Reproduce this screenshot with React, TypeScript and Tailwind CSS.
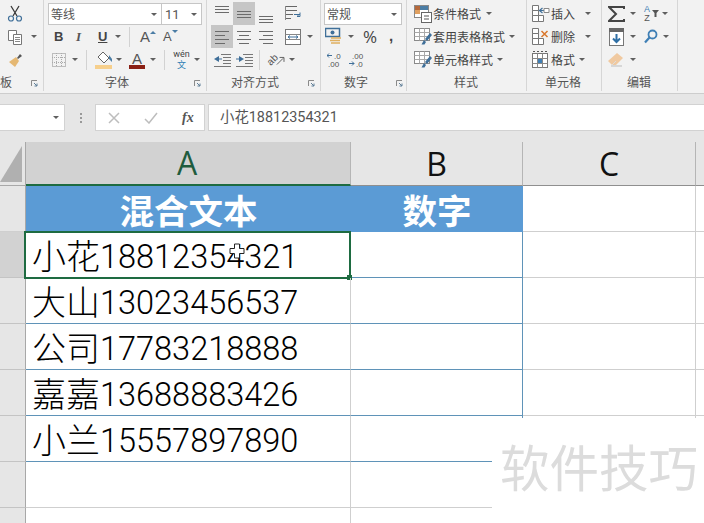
import React from "react";

const Caret = ({ className = "" }: { className?: string }) => (
  <svg width="6" height="3" viewBox="0 0 6 3" className={"shrink-0 " + className}><path d="M0 0h6L3 3z" fill="#5f5f5f" /></svg>
);

const Launcher = ({ className = "" }: { className?: string }) => (
  <svg width="7" height="7" viewBox="0 0 7 7" className={"shrink-0 " + className}>
    <path d="M0.5 6V0.5H6" fill="none" stroke="#8a8a8a" />
    <path d="M3 3l3 3M6 3.5V6H3.5" fill="none" stroke="#5f7f98" />
  </svg>
);

const VSep = ({ className = "" }: { className?: string }) => <div className={"w-px h-[20px] bg-[#d2d2d2] shrink-0 " + className} />;

const Lines = ({ kind }: { kind: "left" | "center" | "right" | "top" | "middle" | "bottom" }) => {
  const f: Record<string, [number, number, number][]> = {
    left: [[1, 15, 6], [1, 11, 10], [1, 15, 14], [1, 11, 18]],
    center: [[1, 15, 6], [3, 13, 10], [1, 15, 14], [3, 13, 18]],
    right: [[1, 15, 6], [5, 15, 10], [1, 15, 14], [5, 15, 18]],
    top: [[1, 15, 4], [1, 15, 7], [1, 15, 10]],
    middle: [[1, 15, 9], [1, 15, 12], [1, 15, 15]],
    bottom: [[1, 15, 14], [1, 15, 17], [1, 15, 20]],
  };
  return (
    <svg width="16" height="23" viewBox="0 0 16 23">
      {f[kind].map(([a, b, y]) => (<path key={y} d={`M${a} ${y + 0.5}H${b}`} stroke="#6b6b6b" />))}
    </svg>
  );
};

const Cell = ({ active, kind }: { active?: boolean; kind: "left" | "center" | "right" | "top" | "middle" | "bottom" }) => (
  <div className={"w-[22px] h-[23px] flex items-center justify-center shrink-0 " + (active ? "bg-[#c6c6c6]" : "")}><Lines kind={kind} /></div>
);

const TableIcon = ({ brush }: { brush?: boolean }) => (
  <svg width="18" height="18" viewBox="0 0 18 18" className="shrink-0">
    <rect x="0.5" y="0.5" width="15" height="12" fill="#fff" stroke="#8a8a8a" />
    <path d="M0.5 4.5h15M0.5 8.5h15M5.5 0.5v12M10.5 0.5v12" stroke="#a9a9a9" />
    {brush && <path d="M16 5l-5 6 2 2 5-6zM10 12l2 2-1.500 2.500H7.500z" fill="#3f6f99" />}
  </svg>
);

const GridIcon = ({ kind }: { kind: "insert" | "delete" | "format" }) => (
  <svg width="18" height="20" viewBox="0 0 18 20" className="shrink-0">
    {kind === "format" ? (
      <>
        <rect x="0.5" y="3.500" width="15" height="14" fill="#fff" stroke="#777" />
        <path d="M0.500 8.500h15M0.500 13.500h15M5.500 3.500v14M10.500 3.500v14" stroke="#888" />
        <rect x="6" y="9" width="4" height="4" fill="#3f7fb5" />
        <path d="M1 1.500h2M5 1.500h2M9 1.500h2M13 1.500h2" stroke="#555" />
      </>
    ) : (
      <>
        <path d="M0.500 1.500h6v5h-6zM0.500 6.500h6v5h-6zM0.500 11.500h6v6h-6zM6.500 11.500h5v6h-5z" fill="#fff" stroke="#777" />
        {kind === "insert" ? (
          <>
            <path d="M17 6.500H8M10.500 4l-3 2.500 3 2.500" fill="none" stroke="#3f6f99" strokeWidth="1.200" />
            <path d="M12 4.500h5v4h-5z" fill="#fff" stroke="#888" />
          </>
        ) : (
          <path d="M9.500 4l6 6M15.500 4l-6 6" stroke="#d9772c" strokeWidth="1.500" />
        )}
      </>
    )}
  </svg>
);

const Group = ({ w, children, label, labelCls, launcher }: { w: string; children: React.ReactNode; label: string; labelCls: string; launcher?: string }) => (
  <div className={"flex flex-col h-[91px] pt-[2px] border-r border-[#d6d6d6] shrink-0 overflow-hidden " + w}>
    <div className="h-[71px] flex flex-col">{children}</div>
    <div className="h-[18px] flex items-center text-[12px] text-[#555] leading-none">
      <span className={labelCls}>{label}</span>
      {launcher && <Launcher className={"ml-auto mt-[3px] " + launcher} />}
    </div>
  </div>
);

const Row = ({ children, className = "" }: { children: React.ReactNode; className?: string }) => (
  <div className={"h-[23px] flex items-center shrink-0 " + className}>{children}</div>
);

const Ribbon = () => (
  <div className="h-[94px] bg-[#f2f2f2] border-b border-[#cdcdcd] flex text-[#444] text-[12px] leading-none">
    <Group w="w-[44px]" label="板" labelCls="ml-0" launcher="mr-[5px]">
      <Row>
        <svg width="16" height="17" viewBox="0 0 16 17" className="ml-[7px]"><path d="M4 1l6 10M12 1L6 11" stroke="#3a3a3a" strokeWidth="1.300" /><circle cx="4" cy="13.500" r="2.500" fill="none" stroke="#3f6f99" strokeWidth="1.200" /><circle cx="12" cy="13.500" r="2.500" fill="none" stroke="#3f6f99" strokeWidth="1.200" /></svg>
      </Row>
      <Row>
        <svg width="16" height="16" viewBox="0 0 16 16" className="ml-[7px]"><path d="M1.500 1.500h8v10h-8z" fill="#fff" stroke="#777" /><path d="M6.500 5.500h8v10h-8z" fill="#fff" stroke="#777" /><path d="M8 8.500h5M8 10.500h5M8 12.500h5" stroke="#888" /></svg>
        <Caret className="ml-[8px]" />
      </Row>
      <Row>
        <svg width="16" height="16" viewBox="0 0 16 16" className="ml-[8px]"><path d="M9 6l3-4 2 2-4 3z" fill="#555" /><path d="M8 5l3 4-4 6-6-5z" fill="#e5b873" /></svg>
      </Row>
    </Group>

    <Group w="w-[163px]" label="字体" labelCls="ml-[61px]" launcher="mr-[5px]">
      <Row className="items-start">
        <div className="ml-[4px] mt-[1px] w-[114px] h-[22px] bg-white border border-[#c6c6c6] flex items-center pl-[2px] text-[#555]">等线<Caret className="ml-auto mr-[4px]" /></div>
        <div className="ml-[-1px] mt-[1px] w-[41px] h-[22px] bg-white border border-[#c6c6c6] flex items-center pl-[3px] text-[13px] text-[#555] font-['Roboto']">11<Caret className="ml-auto mr-[4px]" /></div>
      </Row>
      <Row>
        <span className="ml-[10px] w-[10px] font-bold font-['Liberation_Sans'] text-[13px] text-[#444]">B</span>
        <span className="ml-[12px] w-[10px] italic font-bold font-['Liberation_Serif'] text-[13px] text-[#555]">I</span>
        <span className="ml-[12px] w-[10px] font-bold font-['Liberation_Sans'] text-[13px] text-[#444] underline">U</span>
        <Caret className="ml-[7px]" />
        <VSep className="ml-[8px]" />
        <span className="ml-[10px] w-[10px] font-['Liberation_Sans'] text-[15px] text-[#555]">A</span>
        <svg width="6" height="4" viewBox="0 0 6 4" className="mb-[10px]"><path d="M0 4l3-3 3 3z" fill="#4b7da5" /></svg>
        <span className="ml-[7px] w-[9px] font-['Liberation_Sans'] text-[13px] text-[#555]">A</span>
        <svg width="6" height="4" viewBox="0 0 6 4" className="mb-[10px]"><path d="M0 0l3 3 3-3z" fill="#4b7da5" /></svg>
      </Row>
      <Row>
        <svg width="14" height="14" viewBox="0 0 14 14" className="ml-[8px]"><rect x="0.500" y="0.500" width="13" height="13" fill="none" stroke="#888" strokeDasharray="1 1" /><path d="M0 4.500h14M0 9.500h14M4.500 0v14M9.500 0v14" stroke="#aaa" strokeDasharray="1 1" /></svg>
        <Caret className="ml-[6px]" />
        <VSep className="ml-[8px]" />
        <svg width="18" height="18" viewBox="0 0 18 18" className="ml-[8px]"><path d="M8 1l6 6-5 5-6-6z" fill="#fff" stroke="#666" /><path d="M14 4l3 4v3l-3-3z" fill="#4b7da5" /><rect x="0" y="14" width="17" height="4" fill="#f6cf8c" /></svg>
        <Caret className="ml-[3px]" />
        <div className="ml-[7px] w-[16px] h-[18px] flex flex-col items-center shrink-0"><span className="block font-['Liberation_Sans'] text-[15px] h-[14px] text-[#555] leading-none">A</span><div className="w-[16px] h-[4px] bg-[#8a2015]" /></div>
        <Caret className="ml-[5px]" />
        <VSep className="ml-[8px]" />
        <div className="ml-[8px] w-[17px] flex flex-col items-center gap-[1px] shrink-0"><span className="block text-[9px] leading-[9px] text-[#444] font-['Roboto']">wén</span><span className="block text-[9px] leading-[9px] text-[#2f7fb5]">文</span></div>
        <Caret className="ml-[4px]" />
      </Row>
    </Group>

    <Group w="w-[114px]" label="对齐方式" labelCls="ml-[24px]" launcher="mr-[5px]">
      <Row>
        <div className="ml-[4px]" />
        <Cell kind="top" /><Cell active kind="middle" /><Cell kind="bottom" />
        <svg width="17" height="17" viewBox="0 0 17 17" className="ml-[8px]"><path d="M1 1.500h11M1 5.500h11M1 9.500h7M1 13.500h5" stroke="#666" /><path d="M0.500 1v14" stroke="#888" /><path d="M9 9.500h6v-2M15 9.500v2h-3M12 9.500l2 2" fill="none" stroke="#3f6f99" /></svg>
      </Row>
      <Row>
        <div className="ml-[4px]" />
        <Cell active kind="left" /><Cell kind="center" /><Cell kind="right" />
        <svg width="16" height="16" viewBox="0 0 16 16" className="ml-[8px]"><rect x="0.500" y="0.500" width="15" height="15" fill="#fff" stroke="#777" /><path d="M0.500 5.500h15M0.500 10.500h15" stroke="#888" /><path d="M3 8h10M3 8l2-1.500M3 8l2 1.500M13 8l-2-1.500M13 8l-2 1.500" stroke="#3f6f99" /></svg>
        <Caret className="ml-[6px]" />
      </Row>
      <Row>
        <svg width="17" height="14" viewBox="0 0 17 14" className="ml-[7px]"><path d="M7 1.500h10M9 4.500h8M9 7.500h8M9 10.500h8M0 13.500h17" stroke="#777" /><path d="M0 6l5-3v6z" fill="#3f6f99" /><path d="M4 6h4" stroke="#3f6f99" /></svg>
        <svg width="17" height="14" viewBox="0 0 17 14" className="ml-[5px]"><path d="M7 1.500h10M9 4.500h8M9 7.500h8M9 10.500h8M0 13.500h17" stroke="#777" /><path d="M8 6L3 3v6z" fill="#3f6f99" /><path d="M0 6h4" stroke="#3f6f99" /></svg>
        <VSep className="ml-[6px]" />
        <div className="ml-[7px] w-[18px] h-[18px] flex items-center shrink-0">
          <span className="block rotate-[-45deg] text-[10px] leading-[10px] text-[#555] font-['Liberation_Sans']">ab</span>
          <svg width="10" height="10" viewBox="0 0 10 10" className="ml-[-2px] mt-[2px]"><path d="M1 9l7-7M4 1h5v5" fill="none" stroke="#555" /></svg>
        </div>
        <Caret className="ml-[4px]" />
      </Row>
    </Group>

    <Group w="w-[86px]" label="数字" labelCls="ml-[23px]" launcher="mr-[3px]">
      <Row className="items-start">
        <div className="ml-[3px] mt-[1px] w-[78px] h-[22px] bg-white border border-[#c6c6c6] flex items-center pl-[2px] text-[#555]">常规<Caret className="ml-auto mr-[4px]" /></div>
      </Row>
      <Row>
        <svg width="18" height="19" viewBox="0 0 18 19" className="ml-[4px]"><rect x="0.500" y="1.500" width="14" height="8" fill="none" stroke="#3f6f99" strokeWidth="1.500" /><circle cx="7.500" cy="5.500" r="2" fill="#3f6f99" /><path d="M6 11h10M5 13.500h10M6 16h9" stroke="#e0b060" strokeWidth="1.500" /></svg>
        <Caret className="ml-[5px]" />
        <span className="ml-[9px] text-[17px] text-[#444] font-['Open_Sans']">%</span>
        <span className="ml-[12px] text-[15px] font-bold text-[#444] font-['Liberation_Sans'] mt-[-3px]">,</span>
      </Row>
      <Row>
        <svg width="16" height="17" viewBox="0 0 16 17" className="ml-[6px]"><path d="M0 4.500h5M0 4.500l2-2M0 4.500l2 2" fill="none" stroke="#3f6f99" /><text x="7" y="8" fontSize="8" fill="#555" fontFamily="Liberation Sans">.0</text><text x="1" y="16" fontSize="8" fill="#555" fontFamily="Liberation Sans">.00</text></svg>
        <svg width="16" height="17" viewBox="0 0 16 17" className="ml-[6px]"><text x="3" y="8" fontSize="8" fill="#555" fontFamily="Liberation Sans">.00</text><path d="M0 12.500h5M5 12.500l-2-2M5 12.500l-2 2" fill="none" stroke="#3f6f99" /><text x="7" y="16" fontSize="8" fill="#555" fontFamily="Liberation Sans">.0</text></svg>
      </Row>
    </Group>

    <Group w="w-[120px]" label="样式" labelCls="ml-[47px]">
      <Row>
        <svg width="18" height="18" viewBox="0 0 18 18" className="ml-[7px] shrink-0"><rect x="0.500" y="0.500" width="14" height="12" fill="#fff" stroke="#888" /><rect x="1" y="1" width="5" height="4" fill="#b5683a" /><rect x="1" y="5" width="5" height="4" fill="#e0a060" /><rect x="6" y="1" width="8" height="4" fill="#4b7da5" /><rect x="7.500" y="7.500" width="10" height="10" fill="#fff" stroke="#666" /><path d="M10 11h5M10 14h5" stroke="#555" /></svg>
        <span className="ml-[1px]">条件格式</span><Caret className="ml-[5px]" />
      </Row>
      <Row>
        <div className="ml-[7px]"><TableIcon brush /></div>
        <span className="ml-[1px]">套用表格格式</span><Caret className="ml-[4px]" />
      </Row>
      <Row>
        <div className="ml-[7px]"><TableIcon brush /></div>
        <span className="ml-[1px]">单元格样式</span><Caret className="ml-[4px]" />
      </Row>
    </Group>

    <Group w="w-[75px]" label="单元格" labelCls="ml-[18px]">
      <Row><div className="ml-[5px]"><GridIcon kind="insert" /></div><span className="ml-[1px]">插入</span><Caret className="ml-[10px]" /></Row>
      <Row><div className="ml-[5px]"><GridIcon kind="delete" /></div><span className="ml-[1px]">删除</span><Caret className="ml-[10px]" /></Row>
      <Row><div className="ml-[5px]"><GridIcon kind="format" /></div><span className="ml-[1px]">格式</span><Caret className="ml-[4px]" /></Row>
    </Group>

    <Group w="w-[76px]" label="编辑" labelCls="ml-[25px]">
      <Row>
        <svg width="17" height="16" viewBox="0 0 17 16" className="ml-[6px]"><path d="M16 3V1H1l7 7-7 7h15v-2" fill="none" stroke="#444" strokeWidth="2" /></svg>
        <Caret className="ml-[5px]" />
        <div className="ml-[6px] w-[10px] flex flex-col items-center shrink-0 font-['Liberation_Sans'] text-[9px]">
          <span className="block leading-[9px] text-[#3f7fb5]">A</span>
          <span className="block leading-[9px] text-[#555]">Z</span>
        </div>
        <svg width="8" height="9" viewBox="0 0 8 9" className="shrink-0"><path d="M0 1h7L4.500 4v4h-2V4z" fill="#555" /></svg>
        <Caret className="ml-[2px]" />
      </Row>
      <Row>
        <svg width="15" height="18" viewBox="0 0 15 18" className="ml-[7px]"><rect x="0.500" y="0.500" width="14" height="17" fill="#fff" stroke="#777" /><rect x="0" y="0" width="15" height="4" fill="#666" /><path d="M7.500 6v8M4 10.500l3.500 3.500 3.500-3.500" fill="none" stroke="#2f6fa5" strokeWidth="2" /></svg>
        <Caret className="ml-[6px]" />
        <svg width="14" height="15" viewBox="0 0 14 15" className="ml-[8px]"><circle cx="8.500" cy="5.500" r="4" fill="none" stroke="#3f7fb5" strokeWidth="1.800" /><path d="M5.500 8.500L1 13.500" stroke="#3f7fb5" strokeWidth="2.200" /></svg>
        <Caret className="ml-[5px]" />
      </Row>
      <Row>
        <svg width="16" height="15" viewBox="0 0 16 15" className="ml-[6px]"><path d="M9 1l6 5-7 7H4L0 9z" fill="#f0c9a0" /><path d="M3 14h11" stroke="#bbb" /><path d="M4 13l4-4" stroke="#ddd" /></svg>
        <Caret className="ml-[6px]" />
      </Row>
    </Group>
  </div>
);

const FormulaBar = () => (
  <div className="h-[48px] bg-[#e6e6e6] pt-[10px] flex items-start">
    <div className="w-[65px] h-[27px] bg-white border border-[#d2d2d2] border-l-0 flex items-center shrink-0"><Caret className="ml-auto mr-[5px]" /></div>
    <div className="w-[30px] h-[27px] flex flex-col items-center justify-center gap-[2px] shrink-0 pl-[1px]">
      <div className="w-[2px] h-[2px] bg-[#999]" /><div className="w-[2px] h-[2px] bg-[#999]" /><div className="w-[2px] h-[2px] bg-[#999]" />
    </div>
    <div className="w-[110px] h-[27px] bg-white border border-[#d2d2d2] flex items-center shrink-0">
      <svg width="12" height="12" viewBox="0 0 12 12" className="ml-[12px]"><path d="M1 1l10 10M11 1L1 11" stroke="#bdbdbd" strokeWidth="1.500" /></svg>
      <svg width="14" height="12" viewBox="0 0 14 12" className="ml-[24px]"><path d="M1 7l4 4 8-10" fill="none" stroke="#bdbdbd" strokeWidth="1.500" /></svg>
      <span className="ml-[24px] italic font-bold text-[14px] text-[#555] font-['Liberation_Serif']">fx</span>
    </div>
    <div className="ml-[3px] flex-1 h-[27px] bg-white border border-[#d2d2d2] border-r-0 flex items-center pl-[11px] text-[14.400px] text-[#555] font-['Roboto','Noto_Sans_CJK_SC',sans-serif]">小花18812354321</div>
  </div>
);

const rows = [
  ["小花", "18812354321"],
  ["大山", "13023456537"],
  ["公司", "17783218888"],
  ["嘉嘉", "13688883426"],
  ["小兰", "15557897890"],
];

const gray = "border-[#cfcfcf]";
const blue = "border-[#5f93b8]";

const Sheet = () => (
  <div className="grid grid-cols-[26px_325px_172px_173px_8px] grid-rows-[44px_repeat(8,46px)]">
    {/* column headers */}
    <div className="bg-[#e6e6e6] border-r border-b border-[#a8a8a8] overflow-hidden pt-[4px]">
      <svg width="22" height="37" viewBox="0 0 22 37"><path d="M22 0v36H0z" fill="#b0b0b0" /></svg>
    </div>
    <div className="bg-[#d2d2d2] border-r border-[#b5b5b5] border-b-2 border-b-[#1e6b41] flex items-center justify-center pr-[2px] text-[32px] text-[#1f5c3e] font-['Open_Sans']">A</div>
    <div className="bg-[#e6e6e6] border-r border-[#b5b5b5] border-b border-b-[#8f8f8f] flex items-center justify-center text-[32px] text-[#111] font-['Open_Sans']">B</div>
    <div className="bg-[#e6e6e6] border-r border-[#b5b5b5] border-b border-b-[#8f8f8f] flex items-center justify-center text-[32px] text-[#111] font-['Open_Sans']">C</div>
    <div className="bg-[#e6e6e6] border-b border-[#8f8f8f]" />

    {/* title row */}
    <div className="bg-[#e6e6e6] border-r border-[#a8a8a8] border-b border-b-[#cfcfcf]" />
    <div className="bg-[#5b9bd5] flex items-center justify-center text-white font-semibold text-[34.500px] leading-none">混合文本</div>
    <div className="bg-[#5b9bd5] flex items-center justify-center text-white font-semibold text-[34.500px] leading-none">数字</div>
    <div className={"border-r border-b " + gray} />
    <div className={"border-b " + gray} />

    {/* data rows */}
    {rows.map((r, i) => (
      <React.Fragment key={i}>
        <div className={"border-r border-r-[#a8a8a8] border-b border-b-[#c4c4c4] " + (i === 0 ? "bg-[#d2d2d2]" : "bg-[#e6e6e6]")} />
        <div className={"relative border-b border-r flex items-center pl-[6px] pt-[5px] font-light leading-none font-['Roboto','Noto_Sans_CJK_SC',sans-serif] text-black whitespace-nowrap " + blue + " border-r-[#cfcfcf]"}>
          <span className="text-[34px]">{r[0]}</span><span className="text-[32.500px]">{r[1]}</span>
          {i === 0 && (
            <>
              <div className="absolute left-[-2px] top-[-1px] w-[327px] h-[48px] border-2 border-[#1e6b41]" />
              <div className="absolute right-[-2px] bottom-[-3px] w-[5px] h-[5px] bg-[#1e6b41]" />
              <svg width="16" height="18" viewBox="0 0 16 18" className="absolute left-[203px] top-[11px]"><path d="M5.500 1h5v4.500H15v5h-4.500V15h-5v-4.500H1v-5h4.500z" fill="#fff" stroke="#222" /></svg>
            </>
          )}
        </div>
        <div className={"border-b border-r " + blue} />
        <div className={"border-b border-r " + gray} />
        <div className={"border-b " + gray} />
      </React.Fragment>
    ))}
    {[0, 1].map((i) => (
      <React.Fragment key={"e" + i}>
        <div className="border-r border-r-[#a8a8a8] border-b border-b-[#c4c4c4] bg-[#e6e6e6]" />
        <div className={"border-b border-r " + gray} />
        <div className={"border-b border-r " + gray} />
        <div className={"border-b border-r " + gray} />
        <div className={"border-b " + gray} />
      </React.Fragment>
    ))}
  </div>
);

export default function App() {
  return (
    <div className="relative w-[704px] h-[523px] overflow-hidden bg-white font-['Noto_Sans_CJK_SC',sans-serif]">
      <Ribbon />
      <FormulaBar />
      <Sheet />
      <div className="absolute left-[492px] top-[418px] w-[212px] h-[105px] bg-white pl-[8px] pt-[23px] text-[49.500px] leading-none text-[#dcdcdc] whitespace-nowrap">软件技巧</div>
    </div>
  );
}
